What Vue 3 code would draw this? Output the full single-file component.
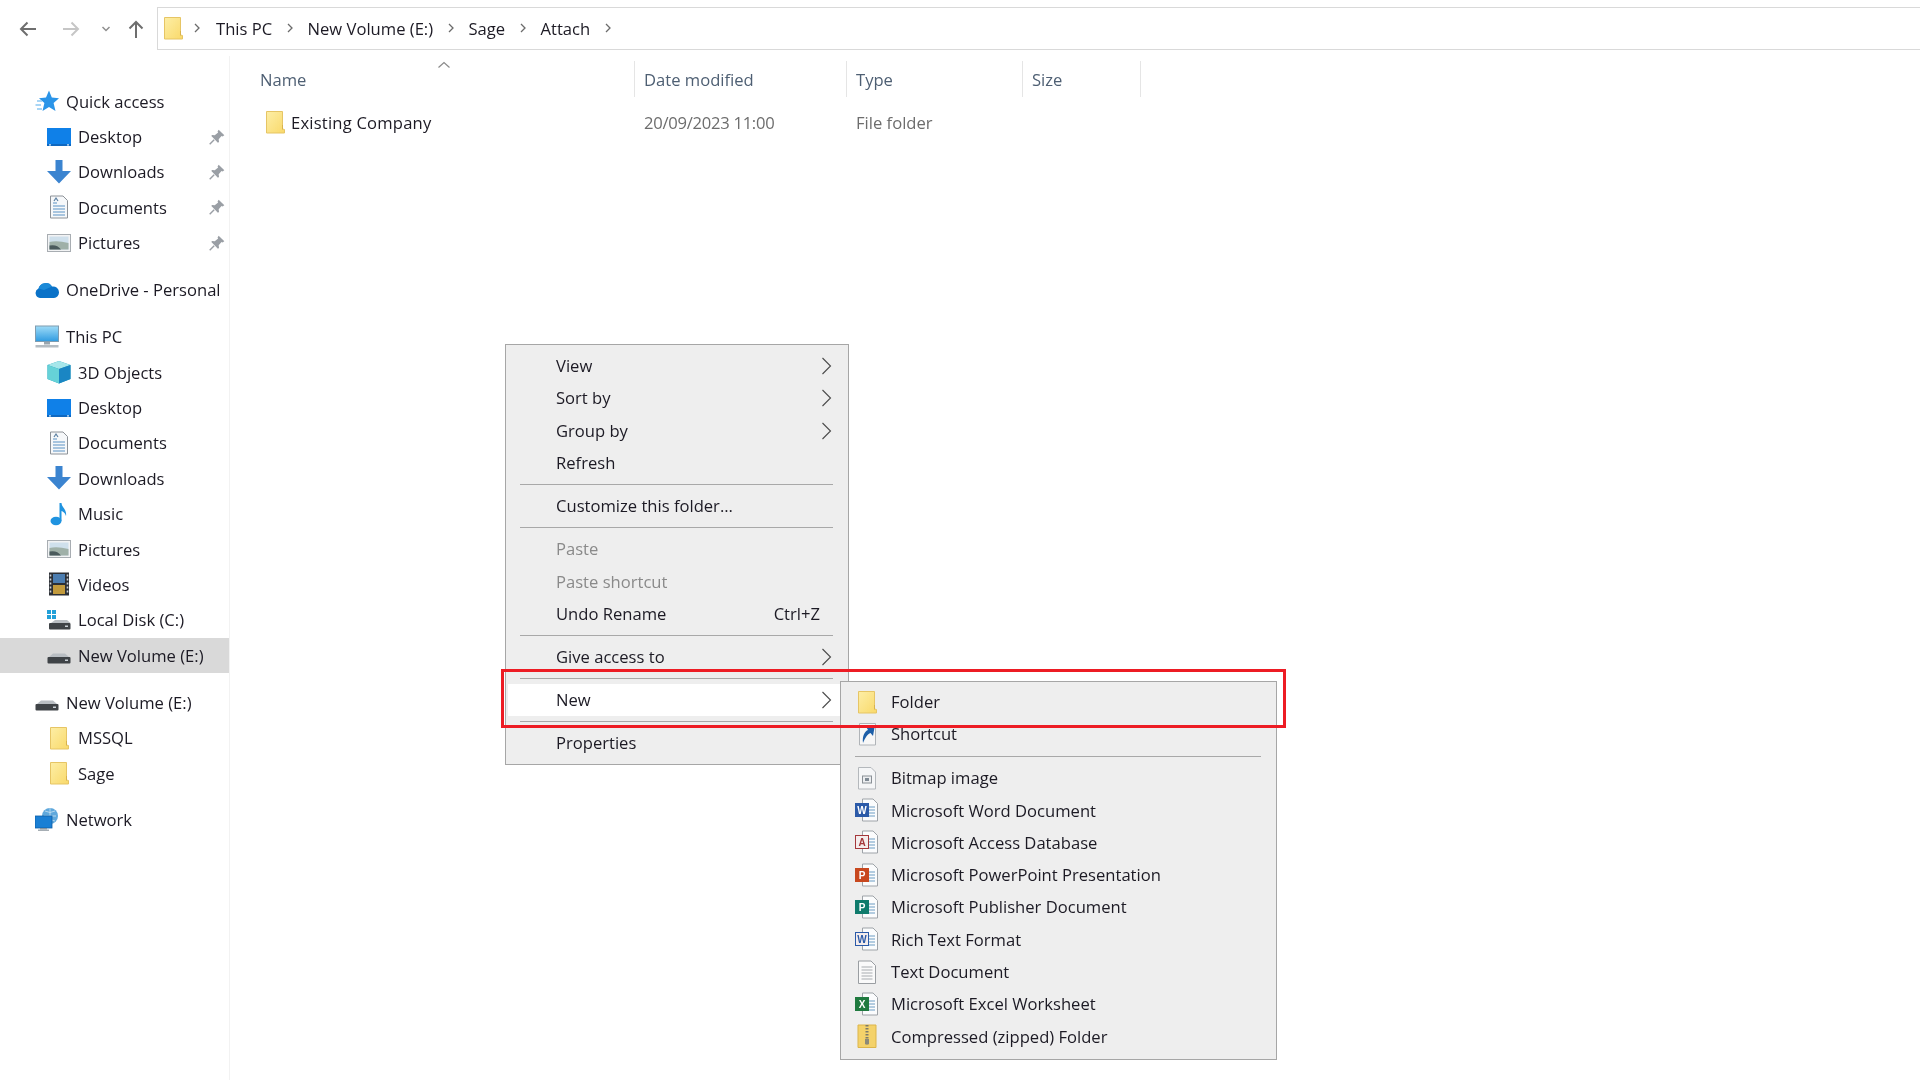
<script setup>
const quick = [
  { icon: 'desktop', label: 'Desktop' },
  { icon: 'downloads', label: 'Downloads' },
  { icon: 'documents', label: 'Documents' },
  { icon: 'pictures', label: 'Pictures' },
]
const pc = [
  { icon: 'cube', label: '3D Objects' },
  { icon: 'desktop', label: 'Desktop' },
  { icon: 'documents', label: 'Documents' },
  { icon: 'downloads', label: 'Downloads' },
  { icon: 'music', label: 'Music' },
  { icon: 'pictures', label: 'Pictures' },
  { icon: 'videos', label: 'Videos' },
  { icon: 'localdisk', label: 'Local Disk (C:)' },
  { icon: 'drive', label: 'New Volume (E:)', selected: true },
]
const vol = [
  { icon: 'folder', label: 'MSSQL' },
  { icon: 'folder', label: 'Sage' },
]
const crumbs = ['This PC', 'New Volume (E:)', 'Sage', 'Attach']
const menu = [
  { label: 'View', arrow: true },
  { label: 'Sort by', arrow: true },
  { label: 'Group by', arrow: true },
  { label: 'Refresh' },
  { sep: true },
  { label: 'Customize this folder...' },
  { sep: true },
  { label: 'Paste', disabled: true },
  { label: 'Paste shortcut', disabled: true },
  { label: 'Undo Rename', shortcut: 'Ctrl+Z' },
  { sep: true },
  { label: 'Give access to', arrow: true },
  { sep: true },
  { label: 'New', arrow: true, active: true },
  { sep: true },
  { label: 'Properties' },
]
const sub = [
  { label: 'Folder', icon: 'folder' },
  { label: 'Shortcut', icon: 'shortcut' },
  { sep: true },
  { label: 'Bitmap image', icon: 'bitmap' },
  { label: 'Microsoft Word Document', color: '#2b5aa8', letter: 'W' },
  { label: 'Microsoft Access Database', color: '#a4373a', letter: 'A', outline: true },
  { label: 'Microsoft PowerPoint Presentation', color: '#c8481f', letter: 'P' },
  { label: 'Microsoft Publisher Document', color: '#0f7b6c', letter: 'P' },
  { label: 'Rich Text Format', color: '#2b5aa8', letter: 'W', outline: true },
  { label: 'Text Document', icon: 'textdoc' },
  { label: 'Microsoft Excel Worksheet', color: '#1f7a3f', letter: 'X' },
  { label: 'Compressed (zipped) Folder', icon: 'zip' },
]
</script>

<template>
  <div class="page">
    <svg class="defs" width="0" height="0" aria-hidden="true">
      <defs>
        <linearGradient id="fold" x1="0" y1="0" x2="1" y2="1">
          <stop offset="0" stop-color="#fdeea6" />
          <stop offset="1" stop-color="#f9d96a" />
        </linearGradient>
        <linearGradient id="sky" x1="0" y1="0" x2="0" y2="1">
          <stop offset="0" stop-color="#9fdcf8" />
          <stop offset="1" stop-color="#2f9be0" />
        </linearGradient>
        <symbol id="folder" viewBox="0 0 24 24">
          <path d="M3.500 1.500H19.500V19L21.500 19.500V23H3.500Z" fill="url(#fold)" stroke="#e6c565" stroke-width="1" />
          <path d="M19.500 15V19.500" stroke="#d8b24c" stroke-width="1" />
        </symbol>
        <symbol id="desktop" viewBox="0 0 24 24">
          <rect x="0" y="3" width="24" height="18" fill="#0f80e8" />
          <rect x="0" y="19" width="24" height="2" fill="#0f68c0" />
          <rect x="2" y="19.300" width="2" height="1.200" fill="#d8ecfb" />
          <rect x="20" y="19.300" width="2" height="1.200" fill="#d8ecfb" />
        </symbol>
        <symbol id="downloads" viewBox="0 0 24 24">
          <path d="M8.500 0H15.500V11H24L12 23.500L0 11H8.500Z" fill="#3b84d0" />
        </symbol>
        <symbol id="documents" viewBox="0 0 24 24">
          <path d="M3.500 1H16L20.500 5.500V23H3.500Z" fill="#f6f8fa" stroke="#8d9298" stroke-width="1" />
          <path d="M6 8H10M6 11H18M6 14H18M6 17H18M6 20H18" stroke="#5a92c4" stroke-width="1.200" />
          <path d="M7 6L9 3L11 6" fill="none" stroke="#5a7ea0" stroke-width="1.200" />
        </symbol>
        <symbol id="pictures" viewBox="0 0 24 24">
          <rect x="0.500" y="3.500" width="23" height="17" fill="#f2f3f4" stroke="#a8adb2" />
          <rect x="2.500" y="5.500" width="19" height="13" fill="#cfe0ec" />
          <path d="M2.500 11Q10 9 21.500 12V18.500H2.500Z" fill="#9fb0a8" />
          <path d="M2.500 14.500Q10 13 14 18.500H2.500Z" fill="#4a5a5c" />
        </symbol>
        <symbol id="star" viewBox="0 0 24 24">
          <path d="M14 1.500L16.800 8.500L24 9.300L18.600 14L20.500 22L14 18L7.500 22L9.400 14L4 9.300L11 8.500Z" fill="#2a94e8" />
          <path d="M2 12H7M0.500 16H6M2 20H7" stroke="#8cc8f2" stroke-width="1.300" />
        </symbol>
        <symbol id="pin" viewBox="0 0 16 16">
          <path d="M9.500 1.500L14.500 6.500L13 7.500L12 7L9.500 10L9.800 12.500L8.800 13L3 7.200L3.500 6.200L6 6.500L9 4L8.500 3Z" fill="#9a9fa5" />
          <path d="M5.500 10.500L1.500 14.500" stroke="#9a9fa5" stroke-width="1.300" />
        </symbol>
        <symbol id="onedrive" viewBox="0 0 24 24">
          <path d="M5 20A5 5 0 0 1 3.500 10.500A7.500 7.500 0 0 1 17 8.500A6 6 0 0 1 24 14.500A5.500 5.500 0 0 1 19 20Z" fill="#0a72c8" />
          <path d="M3.500 10.500A7.500 7.500 0 0 1 17 8.500L9 12Z" fill="#1c8ad8" />
        </symbol>
        <symbol id="monitor" viewBox="0 0 24 24">
          <rect x="0.500" y="1" width="23" height="15.500" fill="url(#sky)" stroke="#7f9cb0" />
          <rect x="9" y="17" width="6" height="2.500" fill="#9aa5ad" />
          <rect x="0.500" y="20" width="23" height="2.500" fill="#b4bcc2" />
        </symbol>
        <symbol id="cube" viewBox="0 0 24 24">
          <path d="M12 1L23.500 5V19L12 23.500L0.500 19V5Z" fill="#1d9eb8" />
          <path d="M12 1L23.500 5L12 9L0.500 5Z" fill="#a6e6ea" />
          <path d="M0.500 5L12 9V23.500L0.500 19Z" fill="#66d2d8" />
          <path d="M12 9L23.500 5V19L12 23.500Z" fill="#1a86c4" />
        </symbol>
        <symbol id="music" viewBox="0 0 24 24">
          <ellipse cx="9" cy="19" rx="5.500" ry="4.200" fill="#1f93e0" />
          <path d="M12.500 1H14.500C14.800 6 20 7 19 14C18 10.500 16 9.500 14.500 9V19H12.500Z" fill="#1f93e0" />
        </symbol>
        <symbol id="videos" viewBox="0 0 24 24">
          <rect x="2" y="0.500" width="20" height="23" fill="#2c2f35" />
          <rect x="6" y="2" width="12" height="9" fill="#4c7db0" />
          <rect x="6" y="13" width="12" height="9" fill="#c29a3c" />
          <path d="M3.500 2.500V21.500M20.500 2.500V21.500" stroke="#cfd3d8" stroke-width="1.600" stroke-dasharray="2 2" />
        </symbol>
        <symbol id="localdisk" viewBox="0 0 24 24">
          <path d="M0 2H4V6H0ZM5 2H9V6H5ZM0 7H4V11H0ZM5 7H9V11H5Z" fill="#22a0d8" />
          <path d="M4 15L8 12H20L23.500 15Z" fill="#b9bec3" />
          <rect x="2" y="15" width="21.500" height="6.500" rx="1" fill="#3f4347" />
          <rect x="18" y="17.500" width="3" height="1.500" fill="#c9d0d6" />
        </symbol>
        <symbol id="drive" viewBox="0 0 24 24">
          <path d="M2 14L6 10.500H18L22 14Z" fill="#b9bec3" />
          <rect x="0.500" y="14" width="23" height="6.500" rx="1" fill="#3f4347" />
          <rect x="18" y="16.500" width="3" height="1.500" fill="#c9d0d6" />
        </symbol>
        <symbol id="network" viewBox="0 0 24 24">
          <circle cx="15" cy="8" r="8" fill="#5fa8dc" />
          <path d="M9 8H21M15 0V16M10 3Q15 6 20 3M10 13Q15 10 20 13" stroke="#c8e2f4" stroke-width="0.800" fill="none" />
          <rect x="0" y="8" width="17" height="12" fill="#1a7fd4" stroke="#0d5ea6" stroke-width="0.800" />
          <rect x="5" y="20" width="7" height="1.500" fill="#8a949c" />
          <rect x="3" y="21.500" width="11" height="1.500" fill="#a6aeb4" />
        </symbol>
        <symbol id="shortcut" viewBox="0 0 24 24">
          <path d="M4.500 1.500H20.500V23H4.500Z" fill="#f7f7f7" stroke="#b0b4b8" />
          <path d="M8 21C7 14 10 9 13 8L11 4.500L19.500 5.500L18 14L15.500 11C12.500 12 10 16 8 21Z" fill="#1d5fa8" />
        </symbol>
        <symbol id="bitmap" viewBox="0 0 24 24">
          <path d="M3.500 1.500H16L20.500 6V23H3.500Z" fill="#f5f6f7" stroke="#b4b8bc" />
          <rect x="7.500" y="10" width="9" height="7" fill="#eceef0" stroke="#8a9096" />
          <rect x="10" y="12" width="4" height="3" fill="#7f8a94" />
        </symbol>
        <symbol id="textdoc" viewBox="0 0 24 24">
          <path d="M3.500 1H16L20.500 5.500V23.500H3.500Z" fill="#fafafa" stroke="#9a9ea2" />
          <path d="M6.500 7H17.500M6.500 10H17.500M6.500 13H17.500M6.500 16H17.500M6.500 19H17.500" stroke="#a8acb0" stroke-width="1" />
        </symbol>
        <symbol id="zip" viewBox="0 0 24 24">
          <path d="M3 1H21V23.500H3Z" fill="#f4d26a" stroke="#dcb54a" />
          <path d="M12 1V22" stroke="#7c7a6a" stroke-width="3" stroke-dasharray="1.500 1.500" />
          <rect x="10" y="15" width="4" height="5" fill="#8c8a78" />
        </symbol>
        <symbol id="page" viewBox="0 0 24 24">
          <path d="M7.500 1H18L22.500 5.500V23H7.500Z" fill="#fbfcfd" stroke="#9ea3a8" />
          <path d="M14 9H20M14 12H20M14 15H20M14 18H20" stroke="#6d9cc4" stroke-width="1.200" />
        </symbol>
        <symbol id="sepchev" viewBox="0 0 11 18">
          <path d="M1.500 1L9.500 9L1.500 17" fill="none" stroke="#4a4a4a" stroke-width="1.100" />
        </symbol>
      </defs>
    </svg>

    <header class="toolbar">
      <div class="nav">
        <svg class="nav-arrow back" viewBox="0 0 20 20"><path d="M18 10H3M9.500 3.500L3 10L9.500 16.500" fill="none" stroke="#6e6e6e" stroke-width="2" /></svg>
        <svg class="nav-arrow forward" viewBox="0 0 20 20"><path d="M2 10H17M10.500 3.500L17 10L10.500 16.500" fill="none" stroke="#c6c6c6" stroke-width="2" /></svg>
        <svg class="nav-down" viewBox="0 0 10 10"><path d="M1.500 3L5 6.500L8.500 3" fill="none" stroke="#8f8f8f" stroke-width="1.500" /></svg>
        <svg class="nav-arrow up" viewBox="0 0 20 20"><path d="M10 19V3M3.500 9.500L10 3L16.500 9.500" fill="none" stroke="#6e6e6e" stroke-width="2" /></svg>
      </div>
      <div class="address">
        <svg class="addr-folder"><use href="#folder" /></svg>
        <svg class="crumb-sep first-sep" viewBox="0 0 8 12"><path d="M2 2L6 6L2 10" fill="none" stroke="#6b6b6b" stroke-width="1.300" /></svg>
        <template v-for="c in crumbs" :key="c">
          <span class="crumb">{{ c }}</span>
          <svg class="crumb-sep" viewBox="0 0 8 12"><path d="M2 2L6 6L2 10" fill="none" stroke="#6b6b6b" stroke-width="1.300" /></svg>
        </template>
      </div>
    </header>

    <div class="body">
      <aside class="sidebar">
        <div class="group">
          <div class="row top"><svg class="ico"><use href="#star" /></svg><span>Quick access</span></div>
          <div v-for="q in quick" :key="q.label" class="row child">
            <svg class="ico"><use :href="'#' + q.icon" /></svg><span>{{ q.label }}</span>
            <svg class="pin"><use href="#pin" /></svg>
          </div>
        </div>
        <div class="group">
          <div class="row top"><svg class="ico"><use href="#onedrive" /></svg><span>OneDrive - Personal</span></div>
        </div>
        <div class="group">
          <div class="row top"><svg class="ico"><use href="#monitor" /></svg><span>This PC</span></div>
          <div v-for="p in pc" :key="p.label" class="row child" :class="{ selected: p.selected }">
            <svg class="ico"><use :href="'#' + p.icon" /></svg><span>{{ p.label }}</span>
          </div>
        </div>
        <div class="group">
          <div class="row top"><svg class="ico"><use href="#drive" /></svg><span>New Volume (E:)</span></div>
          <div v-for="v in vol" :key="v.label" class="row child">
            <svg class="ico"><use :href="'#' + v.icon" /></svg><span>{{ v.label }}</span>
          </div>
        </div>
        <div class="group">
          <div class="row top"><svg class="ico"><use href="#network" /></svg><span>Network</span></div>
        </div>
      </aside>

      <main class="list">
        <div class="cols head">
          <div class="col first">Name<svg class="sort" viewBox="0 0 14 8"><path d="M1.500 6.500L7 1.500L12.500 6.500" fill="none" stroke="#8a8a8a" stroke-width="1.200" /></svg></div>
          <div class="col">Date modified</div>
          <div class="col">Type</div>
          <div class="col">Size</div>
        </div>
        <div class="cols file">
          <div class="cell first name"><svg class="ico file-ico"><use href="#folder" /></svg><span class="name-text">Existing Company</span></div>
          <div class="cell date">20/09/2023 11:00</div>
          <div class="cell">File folder</div>
          <div class="cell"></div>
        </div>
      </main>
    </div>

    <div class="menu main-menu">
      <template v-for="(m, i) in menu" :key="i">
        <div v-if="m.sep" class="sep"><i></i></div>
        <div v-else class="item" :class="{ disabled: m.disabled, active: m.active }">
          <span class="label">{{ m.label }}</span>
          <span v-if="m.shortcut" class="shortcut">{{ m.shortcut }}</span>
          <svg v-if="m.arrow" class="chev"><use href="#sepchev" /></svg>
        </div>
      </template>
    </div>

    <div class="menu sub-menu">
      <template v-for="(s, i) in sub" :key="i">
        <div v-if="s.sep" class="sep"><i></i></div>
        <div v-else class="item">
          <svg v-if="s.icon" class="sub-ico"><use :href="'#' + s.icon" /></svg>
          <svg v-else class="sub-ico" viewBox="0 0 24 24">
            <use href="#page" />
            <rect x="0.500" y="5.500" width="13" height="13" :fill="s.outline ? '#f4ecec' : s.color" :stroke="s.color" />
            <text x="7" y="15.500" text-anchor="middle" class="ltr" :fill="s.outline ? s.color : '#ffffff'">{{ s.letter }}</text>
          </svg>
          <span class="label">{{ s.label }}</span>
        </div>
      </template>
    </div>

    <div class="highlight"></div>
  </div>
</template>

<style scoped>
.page {
  position: relative;
  width: 1920px;
  height: 1080px;
  overflow: hidden;
  background: #fff;
  font-family: "Open Sans", "Noto Sans", sans-serif;
  font-size: 16.6px;
  color: #1c1a24;
  filter: blur(0.5px);
}
.defs { position: absolute; }

.toolbar { display: flex; height: 56px; padding-top: 7px; box-sizing: border-box; }
.nav { width: 157px; flex: none; display: flex; align-items: center; height: 43px; padding-left: 18px; box-sizing: border-box; }
.nav-arrow { width: 20px; height: 20px; flex: none; }
.forward { margin-left: 23px; }
.nav-down { width: 10px; height: 10px; margin-left: 20px; flex: none; }
.up { margin-left: 15px; }

.address {
  flex: 1;
  height: 43px;
  box-sizing: border-box;
  border: 1px solid #d9d9d9;
  border-right: 0;
  display: flex;
  align-items: center;
  padding-left: 3px;
  padding-bottom: 1px;
}
.addr-folder { width: 24px; height: 24px; flex: none; }
.crumb-sep { width: 8px; height: 12px; flex: none; margin: 0 13.700px; }
.first-sep { margin: 0 15px 0 8px; }
.crumb { white-space: nowrap; }

.body { display: flex; height: 1024px; }
.sidebar { width: 230px; flex: none; box-sizing: border-box; padding-top: 28px; border-right: 1px solid #f2f2f2; }
.group { margin-bottom: 11.6px; }
.row { display: flex; align-items: center; height: 35.4px; width: 229px; box-sizing: border-box; padding-bottom: 1px; }
.row.top { padding-left: 35px; }
.row.child { padding-left: 47px; }
.row.selected { background: #d9d9d9; }
.ico { width: 24px; height: 24px; flex: none; margin-right: 7px; }
.pin { width: 18px; height: 18px; margin-left: auto; margin-right: 3px; flex: none; }

.list { flex: 1; padding-top: 5px; }
.cols { display: grid; grid-template-columns: 405px 212px 176px 118px; align-items: center; }
.head { height: 36px; color: #4e5f73; position: relative; }
.col { height: 100%; display: flex; align-items: center; padding-left: 9px; border-right: 1px solid #e5e5e5; box-sizing: border-box; }
.col.first { padding-left: 30px; position: relative; }
.sort { position: absolute; width: 14px; height: 8px; left: 207px; top: 0; }
.file { height: 35px; margin-top: 8px; color: #6d6d6d; padding-bottom: 1px; box-sizing: border-box; }
.cell { padding-left: 9px; box-sizing: border-box; }
.date { letter-spacing: -0.27px; }
.cell.first { padding-left: 33px; display: flex; align-items: center; }
.name { color: #1c1a24; }
.name-text { letter-spacing: 0.2px; }
.file-ico { margin-right: 4px; }

.menu {
  position: absolute;
  box-sizing: border-box;
  background: #eeeeee;
  border: 1px solid #a6a6a6;
  padding: 5px 2px 6px;
}
.main-menu { left: 505px; top: 344px; width: 344px; height: 421px; }
.sub-menu { left: 840px; top: 681px; width: 437px; height: 379px; padding-top: 4px; }
.item { position: relative; height: 32.3px; box-sizing: border-box; display: flex; align-items: center; padding-left: 48px; padding-bottom: 1px; }
.sub-menu .item { padding-left: 12px; }
.item.active { background: #fff; }
.disabled { color: #8a8a8a; }
.label { white-space: nowrap; }
.shortcut { position: absolute; right: 26px; }
.chev { position: absolute; right: 14px; width: 11px; height: 18px; top: 7px; }
.sep { height: 10.8px; display: flex; align-items: center; }
.sep i { display: block; width: 313px; height: 1px; margin-left: 12px; background: #a8a8a8; }
.sub-menu .sep { height: 11.500px; }
.sub-menu .sep i { width: 406px; margin-left: 12px; }
.sub-ico { width: 24px; height: 24px; flex: none; margin-right: 12px; }
.ltr { font-family: "Liberation Sans", sans-serif; font-size: 10px; font-weight: 700; }

.highlight {
  position: absolute;
  left: 501px;
  top: 669px;
  width: 785px;
  height: 59px;
  box-sizing: border-box;
  border: 3px solid #ed1c24;
}
</style>
